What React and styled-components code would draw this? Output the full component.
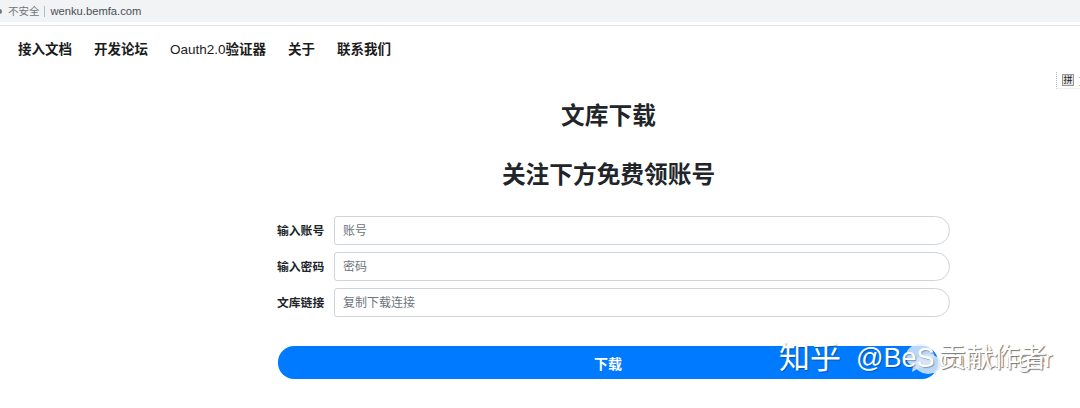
import React from "react";
import styled, { createGlobalStyle } from "styled-components";

const cjk = `"Liberation Sans", "Noto Sans CJK SC", sans-serif`;

const Global = createGlobalStyle`
html,body{margin:0;padding:0;background:#fff;}
body{font-family:${cjk};width:1080px;height:408px;overflow:hidden;}
*{box-sizing:border-box;}
`;

const Page = styled.div`
position:relative;
width:1080px;
height:408px;
overflow:hidden;
background:#fff;
`;

const AddressBar = styled.div`
position:relative;
height:26px;
padding:0 0 3px 8px;
display:flex;
align-items:center;
background:linear-gradient(#f1f3f4 0 22px,#fff 22px);
border-bottom:1px solid #dfe1e5;
font-size:10.5px;
color:#70757a;
&::before{
    content:"";
    position:absolute;
    left:-3px;
    top:9px;
    width:5px;
    height:5px;
    border-radius:50%;
    background:#70757a;
}
`;

const Secure = styled.span`
padding-right:4px;
border-right:1px solid #b8bcc0;
line-height:11px;
`;

const Url = styled.span`
margin-left:6px;
font-size:11.2px;
color:#4a4f54;
`;

const Nav = styled.nav`
height:47px;
padding:1px 0 0 18px;
display:flex;
align-items:center;
gap:22px;
`;

const NavLink = styled.a`
font-size:13.5px;
font-weight:700;
color:#1b1b1b;
line-height:1;
`;

const Plain = styled.span`
font-weight:400;
`;

const Main = styled.main`
display:flex;
flex-direction:column;
align-items:center;
padding:27px 0 0 137px;
`;

const Title = styled.h1`
margin:0 0 ${({$gap})=>$gap}px;
height:32px;
line-height:32px;
font-size:23.7px;
font-weight:700;
color:#212529;
`;

const Form = styled.form`
width:673px;
margin-left:10px;
display:flex;
flex-direction:column;
gap:7px;
`;

const Row = styled.div`
display:flex;
align-items:center;
gap:10px;
`;

const Label = styled.label`
width:47px;
padding-bottom:2px;
font-size:11.8px;
font-weight:700;
color:#212529;
white-space:nowrap;
`;

const Input = styled.input`
width:616px;
height:29px;
padding:1px 8px 0;
border:1px solid #ced4da;
border-radius:3px 15px 15px 3px;
font-family:inherit;
font-size:12px;
background:#fff;
&::placeholder{color:#6c757d;opacity:1;}
`;

const Submit = styled.button`
width:660px;
height:33px;
margin:22px 0 0 1px;
border:0;
border-radius:16px;
background:#007bff;
color:#fff;
font-family:inherit;
font-size:14px;
font-weight:700;
padding:0;
`;

const ImeBar = styled.div`
position:absolute;
left:1056px;
top:72px;
width:24px;
height:17px;
padding-left:5px;
display:flex;
align-items:center;
gap:5px;
border-left:1px dotted #bbb;
border-bottom:1px solid #f0f0f0;
overflow:hidden;
`;

const ImeKey = styled.span`
width:12px;
height:12px;
flex:none;
display:flex;
align-items:center;
justify-content:center;
background:#e4e4e4;
border:1px solid #999;
font-size:9px;
line-height:1;
color:#222;
`;

const ImeClip = styled.span`
font-size:11px;
color:#333;
flex:none;
`;

const Watermark = styled.div`
position:absolute;
left:779px;
top:340px;
height:36px;
display:flex;
align-items:center;
gap:15px;
color:#fff;
font-size:31px;
line-height:36px;
white-space:nowrap;
text-shadow:1px 1px 1px rgba(0,0,0,.3);
`;

const Handle = styled.span`
position:relative;
z-index:1;
font-size:27px;
`;

const Ghost = styled.span`
position:absolute;
left:${({$left})=>$left}px;
top:${({$top})=>$top}px;
font-size:${({$size})=>$size}px;
color:#fff;
text-shadow:1px 1px 1px #777;
`;

const Bubble = styled.svg`
position:absolute;
left:127px;
top:2px;
width:35px;
height:36px;
`;

const App = () => (
  <Page>
    <Global />
    <AddressBar>
      <Secure>不安全</Secure>
      <Url>wenku.bemfa.com</Url>
    </AddressBar>
    <Nav>
      <NavLink>接入文档</NavLink>
      <NavLink>开发论坛</NavLink>
      <NavLink><Plain>Oauth2.0</Plain>验证器</NavLink>
      <NavLink>关于</NavLink>
      <NavLink>联系我们</NavLink>
    </Nav>
    <Main>
      <Title $gap={27}>文库下载</Title>
      <Title $gap={25}>关注下方免费领账号</Title>
      <Form onSubmit={(e)=>e.preventDefault()}>
        <Row><Label>输入账号</Label><Input placeholder="账号" /></Row>
        <Row><Label>输入密码</Label><Input placeholder="密码" /></Row>
        <Row><Label>文库链接</Label><Input placeholder="复制下载连接" /></Row>
        <Submit>下载</Submit>
      </Form>
    </Main>
    <ImeBar>
      <ImeKey>拼</ImeKey>
      <ImeClip>文</ImeClip>
    </ImeBar>
    <Watermark>
      知乎
      <Handle>@BeS</Handle>
      <Bubble viewBox="0 0 35 36">
        <ellipse cx="14" cy="14" rx="14" ry="12" fill="#e6effa" opacity=".8" />
        <ellipse cx="22" cy="22" rx="13" ry="10" fill="#dbe7f5" opacity=".85" />
        <path d="M7 24l-1 6 7-4zM27 30l3 4 0-6z" fill="#dbe7f5" opacity=".85" />
      </Bubble>
      <Ghost $left={160} $top={1} $size={24}>chrodinger</Ghost>
      <Ghost $left={160} $top={0} $size={27}>贡献作者</Ghost>
    </Watermark>
  </Page>
);

export default App;
